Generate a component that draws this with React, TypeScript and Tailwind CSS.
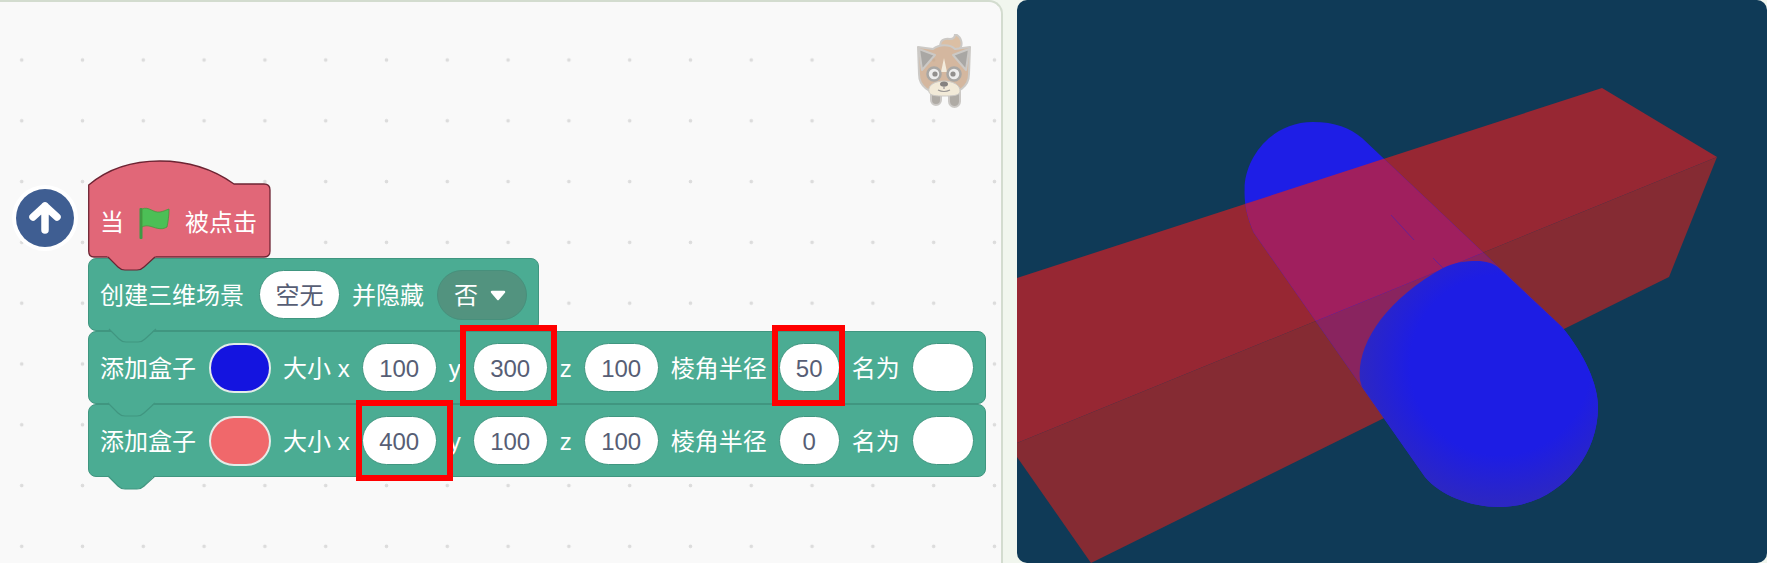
import React from "react";

const font = "font-['Liberation_Sans','Noto_Sans_CJK_SC',sans-serif]";

function Tab({ fill, stroke }: { fill: string; stroke: string }) {
  // pestaña inferior que se monta sobre el bloque siguiente
  return (
    <svg
      className="absolute left-[18px] top-full z-10 -mt-[2px]"
      width="56"
      height="15"
      viewBox="0 0 56 15"
    >
      <path d="M1 0 L3 2 L12 11 Q15 14 19 14 L31 14 Q35 14 38 11 L47 2 L50 0 Z" fill={fill} />
      <path d="M2 1 L12 11 Q15 14 19 14 L31 14 Q35 14 38 11 L49 1" fill="none" stroke={stroke} strokeWidth="1.2" />
    </svg>
  );
}

function Field({ value, w = "w-[75px]" }: { value: string; w?: string }) {
  return (
    <div
      className={`${w} flex h-[49px] shrink-0 items-center justify-center rounded-[25px] border border-[#409680] bg-white pt-[2px] text-[24px] text-[#575e75]`}
    >
      {value}
    </div>
  );
}

function Swatch({ color }: { color: string }) {
  return <div className={`h-[50px] w-[62px] shrink-0 rounded-[25px] border-2 border-[#e4ece8] ${color}`} />;
}

function BoxRow({ swatch, x, y, z, radius }: { swatch: string; x: string; y: string; z: string; radius: string }) {
  return (
    <div className="relative flex h-[73px] w-[898px] items-center gap-3 whitespace-nowrap rounded-lg border border-[#409680] bg-[#4bac93] px-[11px]">
      <span className="w-[97px] shrink-0 pt-[2px]">添加盒子</span>
      <Swatch color={swatch} />
      <span className="shrink-0 pt-[2px]">大小 x</span>
      <Field value={x} />
      <span className="shrink-0 pt-[2px]">y</span>
      <Field value={y} />
      <span className="shrink-0 pt-[2px]">z</span>
      <Field value={z} />
      <span className="shrink-0 pt-[2px]">棱角半径</span>
      <Field value={radius} w="w-[61px]" />
      <span className="w-[48px] shrink-0 pt-[2px]">名为</span>
      <Field value="" w="w-[62px]" />
    </div>
  );
}

function Dog() {
  return (
    <svg className="absolute left-[917px] top-[32px] opacity-75 blur-[0.4px]" width="54" height="74" viewBox="0 0 54 74">
      <g stroke="#bdbab5" strokeWidth="2" strokeLinejoin="round">
        <path d="M24 14 C21 6 28 4 33 5 C36 5 38 3 38 0 C45 3 47 12 41 16 C36 20 27 20 24 14 Z" fill="#d2ac88" />
        <rect x="14" y="50" width="10" height="21" rx="5" fill="#97918a" />
        <rect x="32" y="52" width="11" height="21" rx="5.5" fill="#97918a" />
        <path d="M16 15 C22 10 33 10 38 15 L53 13 L52 40 C52 52 42 60 27 60 C12 60 2 52 2 40 L1 13 Z" fill="#c8a281" />
        <path d="M2 15 L18 21 L5 36 Z" fill="#8f8c88" />
        <path d="M52 15 L36 21 L49 36 Z" fill="#8f8c88" />
      </g>
      <path d="M24 38 L27 24 L30 38 Z" fill="#f2e7d3" />
      <circle cx="17" cy="40" r="6.5" fill="#e9e9e9" stroke="#8f8c88" strokeWidth="2.5" />
      <circle cx="37" cy="40" r="6.5" fill="#e9e9e9" stroke="#8f8c88" strokeWidth="2.5" />
      <circle cx="18" cy="40" r="2.6" fill="#6f6c69" />
      <circle cx="36" cy="40" r="2.6" fill="#6f6c69" />
      <path d="M12 58 C10 50 20 47 27 47 C34 47 44 50 43 58 C42 62 34 62 27 62 C20 62 13 62 12 58 Z" fill="#f0e6ce" stroke="#bdbab5" />
      <ellipse cx="27" cy="50" rx="4" ry="2.6" fill="#5f5b58" />
      <path d="M27 52 V55 M21 56 Q27 59 33 56" stroke="#7b7673" strokeWidth="1.2" fill="none" />
    </svg>
  );
}

function Scene() {
  const silhouette =
    "M1244.6 190 C1244 160 1270 122 1313 122 C1335 122 1350 128 1362 138 L1562 327 C1585 355 1598 385 1598 407 C1598 460 1555 507 1499 507 C1470 507 1440 495 1425 477 L1254 233 C1248 220 1244 205 1244.6 190 Z";
  const nearCap =
    "M1443 268 C1455 262 1465 261 1477 261 C1486 261 1493 263 1499 268 L1562 327 C1585 355 1598 385 1598 407 C1598 460 1555 507 1499 507 C1470 507 1440 495 1425 477 L1362 387 L1360 380 C1356 345 1385 300 1443 268 Z";
  const topFace = "1017,278 1602,88 1717,157 1017,443";
  const frontFace = "1017,443 1717,157 1669,277 1091,563 1017,457";
  return (
    <svg className="block h-full w-full" viewBox="1017 0 750 563">
      <defs>
        <clipPath id="capsule">
          <path d={silhouette} />
        </clipPath>
        <radialGradient id="nearShade" gradientUnits="userSpaceOnUse" cx="1500" cy="365" r="150">
          <stop offset="0.6" stopColor="#1d1de4" />
          <stop offset="1" stopColor="#3029bb" />
        </radialGradient>
      </defs>
      <polygon points={frontFace} fill="#852b33" />
      <polygon points={topFace} fill="#972733" />
      <path d={silhouette} fill="#1e1ee6" />
      <g clipPath="url(#capsule)">
        <polygon points={frontFace} fill="#89245f" />
        <polygon points={topFace} fill="#a01f5e" />
      </g>
      <path d={nearCap} fill="url(#nearShade)" />
      <path d="M1391 215 L1414 240 M1433 258 L1443 268" stroke="#6a1f92" strokeWidth="1" fill="none" />
    </svg>
  );
}

export default function App() {
  return (
    <div className={`flex h-[563px] w-[1767px] overflow-hidden bg-[#f1f6ee] ${font}`}>
      <div className="relative h-full w-[1003px] shrink-0 overflow-hidden rounded-tr-[14px] border-t-2 border-r-2 border-[#d3dccf] bg-[#f9f9f9] bg-[radial-gradient(circle,#dcdcdc_1.5px,transparent_2.2px)] bg-size-[60.8px_60.8px] bg-position-[-8.7px_27.6px]">
        <Dog />

        {/* boton de subir */}
        <div className="absolute left-[12px] top-[183px] flex h-[66px] w-[66px] items-center justify-center rounded-full bg-white">
          <div className="flex h-[58px] w-[58px] items-center justify-center rounded-full bg-[#3f5e92]">
            <svg width="32" height="34" viewBox="0 0 32 34">
              <path d="M16 29 V5 M4 16 L16 5 L28 16" fill="none" stroke="white" strokeWidth="7.5" strokeLinecap="round" strokeLinejoin="round" />
            </svg>
          </div>
        </div>

        {/* pila de bloques */}
        <div className="absolute left-[88px] top-[158px] flex flex-col text-[24px] text-white">
          <div className="relative z-30 h-[98px] w-[183px]">
            <svg className="absolute inset-0" width="183" height="98" viewBox="0 0 183 98">
              <path
                d="M0.7 25 C22 7 48 1 72 1 C100 1 125 9 146 24 L176 24 Q182 24 182 30 L182 91 Q182 97 176 97 L6 97 Q0.7 97 0.7 91 Z"
                fill="#e16778"
                stroke="#6d2433"
                strokeWidth="1.3"
              />
            </svg>
            <div className="absolute bottom-[17px] left-3 flex items-center gap-[15px]">
              <span>当</span>
              <svg width="31" height="33" viewBox="0 0 31 33">
                <rect x="0.5" y="1" width="3" height="31" rx="1" fill="#3f9a45" />
                <path d="M3 2 C10 -1 14 6 21 5 C24 4.6 27 3 30 2 C30 9 29 15 28 20 C22 24 15 20 10 19 C7 18.5 5 19 3 20 Z" fill="#4cbf56" stroke="#45993d" strokeWidth="0.8" />
              </svg>
              <span>被点击</span>
            </div>
            <Tab fill="#e16778" stroke="#6d2433" />
          </div>

          <div className="relative z-20 flex h-[73px] w-[451px] items-center gap-3 whitespace-nowrap rounded-lg border border-[#409680] bg-[#4bac93] px-[11px]">
            <span className="w-[147px] shrink-0 pt-[2px]">创建三维场景</span>
            <div className="flex h-[49px] w-[81px] shrink-0 items-center justify-center rounded-[25px] border border-[#409680] bg-white pt-[2px] text-[#575e75]">
              空无
            </div>
            <span className="w-[73px] shrink-0 pt-[2px]">并隐藏</span>
            <div className="flex h-[50px] w-[90px] shrink-0 items-center gap-3 rounded-[25px] border border-[#47907c] bg-[#52937f] pl-4 pt-[2px]">
              <span>否</span>
              <svg width="16" height="11" viewBox="0 0 16 11">
                <path d="M2 2 H14 L8 9 Z" fill="white" stroke="white" strokeWidth="2.5" strokeLinejoin="round" />
              </svg>
            </div>
            <Tab fill="#4bac93" stroke="#409680" />
          </div>

          <div className="relative z-[15]">
            <BoxRow swatch="bg-[#1414e0]" x="100" y="300" z="100" radius="50" />
            <Tab fill="#4bac93" stroke="#409680" />
          </div>
          <div className="relative z-[14] -mt-px pt-[1px]">
            <BoxRow swatch="bg-[#f0686b]" x="400" y="100" z="100" radius="0" />
            <Tab fill="#4bac93" stroke="#409680" />
          </div>
        </div>

        {/* recuadros rojos */}
        <div className="absolute left-[460px] top-[323px] z-40 h-[81px] w-[97px] border-[6px] border-[#ff0000]" />
        <div className="absolute left-[356px] top-[398px] z-40 h-[81px] w-[97px] border-[6px] border-[#ff0000]" />
        <div className="absolute left-[772px] top-[323px] z-40 h-[81px] w-[73px] border-[6px] border-[#ff0000]" />
      </div>

      <div className="ml-[14px] h-full flex-1 overflow-hidden rounded-[10px] bg-[#0f3a57]">
        <Scene />
      </div>
    </div>
  );
}
